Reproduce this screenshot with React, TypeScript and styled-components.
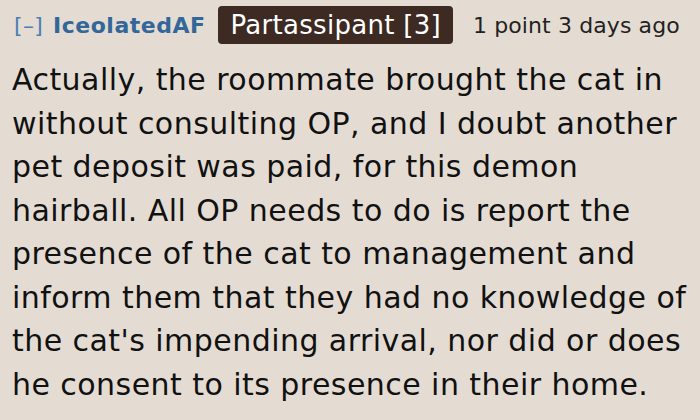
import React from "react";
import styled, { createGlobalStyle } from "styled-components";

const GlobalStyle = createGlobalStyle`
	html, body {
		margin: 0;
		padding: 0;
		background: #e4dcd3;
	}
	body {
		font-family: "DejaVu Sans", Verdana, sans-serif;
	}
`;

const Comment = styled.div`
	width: 700px;
	height: 420px;
	box-sizing: border-box;
	padding: 6px 0 0 12px;
	overflow: hidden;
`;

const Tagline = styled.div`
	display: flex;
	align-items: center;
	height: 38px;
	white-space: nowrap;
`;

const Expand = styled.span`
	color: #4a7fb5;
	font-size: 22px;
	letter-spacing: 0.3px;
	margin-left: 2px;
	margin-right: 10px;
`;

const Author = styled.span`
	color: #336699;
	font-size: 22px;
	font-weight: bold;
	letter-spacing: 0.5px;
`;

const Flair = styled.span`
	display: inline-flex;
	align-items: center;
	height: 38px;
	box-sizing: border-box;
	margin-left: 13px;
	padding: 0 12px;
	background: #3d2a22;
	color: #ffffff;
	font-size: 26px;
	letter-spacing: 0.3px;
	border-radius: 4px;
`;

const Meta = styled.span`
	margin-left: 20px;
	color: #222222;
	font-size: 22px;
	letter-spacing: 0.1px;
`;

const Body = styled.div`
	margin-top: 14px;
	color: #111111;
	font-size: 30px;
	line-height: 43.5px;
	letter-spacing: 0.45px;
	white-space: nowrap;
`;

const lines = [
	"Actually, the roommate brought the cat in",
	"without consulting OP, and I doubt another",
	"pet deposit was paid, for this demon",
	"hairball. All OP needs to do is report the",
	"presence of the cat to management and",
	"inform them that they had no knowledge of",
	"the cat's impending arrival, nor did or does",
	"he consent to its presence in their home.",
];

const App = () => {
	return (
		<>
			<GlobalStyle />
			<Comment>
				<Tagline>
					<Expand>[–]</Expand>
					<Author>IceolatedAF</Author>
					<Flair>Partassipant [3]</Flair>
					<Meta>1 point 3 days ago</Meta>
				</Tagline>
				<Body>
					{lines.map((line, i) => (
						<div key={i}>{line}</div>
					))}
				</Body>
			</Comment>
		</>
	);
};

export default App;
